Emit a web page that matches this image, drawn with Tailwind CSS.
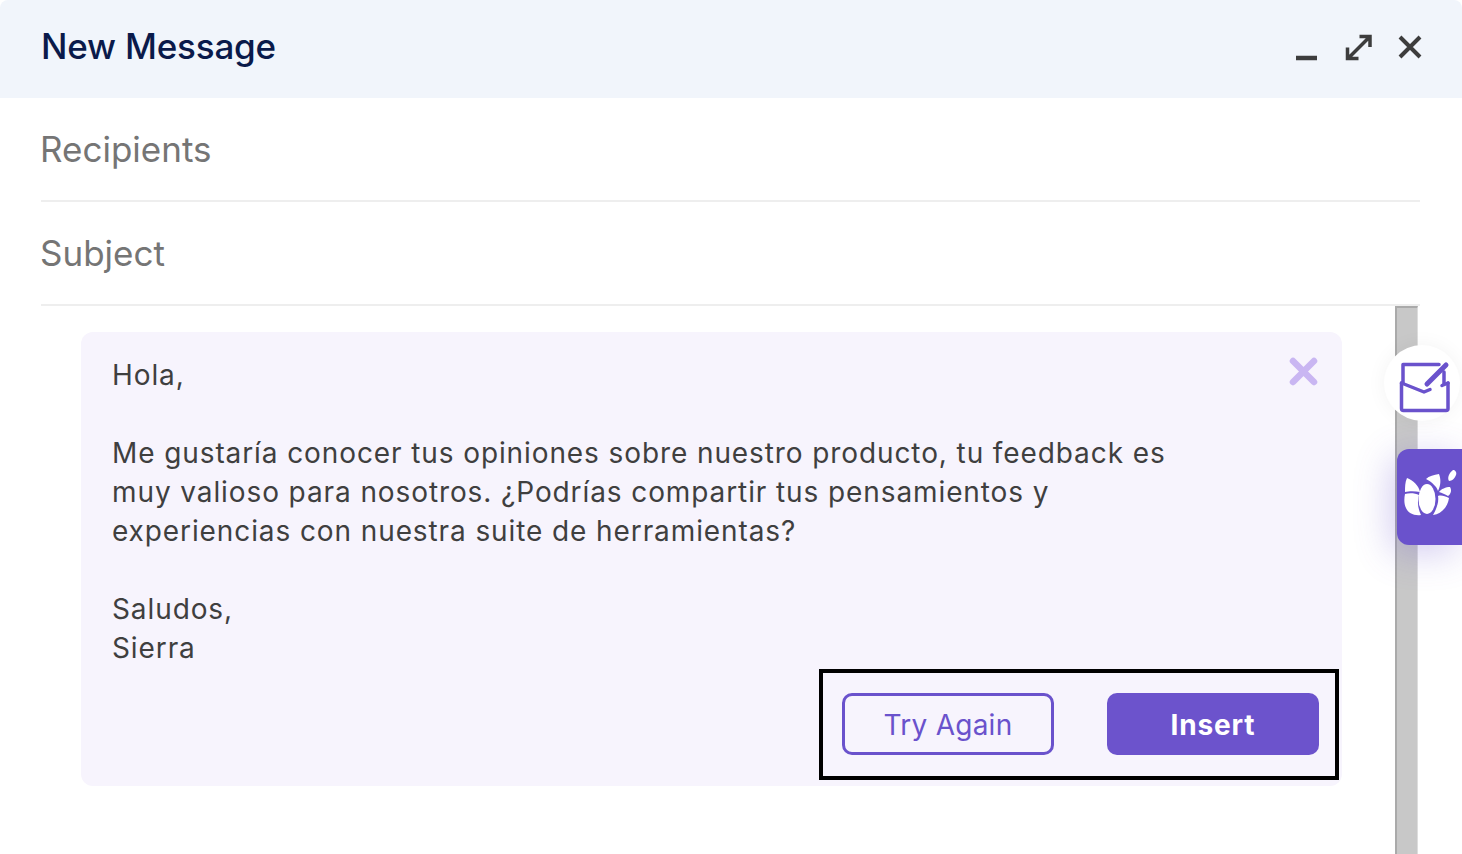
<!DOCTYPE html>
<html>
    <head>
        <meta charset="UTF-8">
        <meta name="viewport" content="width=device-width, initial-scale=1.0">
        <script src="https://cdn.jsdelivr.net/npm/@tailwindcss/browser@4"></script>
        <title>New Message</title>
    </head>
    <body class="bg-white font-['Inter',sans-serif] overflow-hidden">
        <div class="relative w-[1462px] h-[854px] overflow-hidden">
            <!-- Header -->
            <header class="flex justify-between items-center h-[98px] pl-[41px] pr-[39px] pb-1 bg-[#f1f5fb] rounded-t-lg">
                <h1 class="-mt-[2px] text-[35px] font-medium tracking-[-0.2px] text-[#0a1a4a]">New Message</h1>
                <div class="flex items-center gap-[25px] text-[#3d3d3d]">
                    <svg class="w-[27px] h-[27px]" viewBox="0 0 27 27" fill="none" stroke="currentColor" stroke-width="4.500"><path d="M3 24H24"/></svg>
                    <svg class="w-[27px] h-[27px]" viewBox="0 0 27 27" fill="none" stroke="currentColor" stroke-width="3.500"><path d="M14.500 2.500H25V13M25 2.500L3 24.500M2.500 13.500V24.500H13.500"/></svg>
                    <svg class="w-[26px] h-[26px]" viewBox="0 0 26 26" fill="none" stroke="currentColor" stroke-width="4"><path d="M3 3L23 23M23 3L3 23"/></svg>
                </div>
            </header>

            <!-- Fields -->
            <div class="ml-[41px] w-[1379px]">
                <div class="h-[104px] flex items-center border-b-2 border-[#eeeeee] text-[35px] text-[#757575]"><span class="-ml-px">Recipients</span></div>
                <div class="h-[104px] flex items-center border-b-2 border-[#eeeeee] text-[35px] text-[#757575]"><span class="-ml-px">Subject</span></div>
            </div>

            <!-- Body -->
            <div class="flex pl-[81px] h-[549px]">
                <div class="relative w-[1261px] h-[454px] mt-[26px] bg-[#f7f4fd] rounded-xl pl-[31px] pt-[24px]">
                    <p class="text-[28px] leading-[39px] tracking-[0.9px] text-[#3f3f3f] whitespace-pre-line">Hola,

Me gustaría conocer tus opiniones sobre nuestro producto, tu feedback es
muy valioso para nosotros. ¿Podrías compartir tus pensamientos y
experiencias con nuestra suite de herramientas?

Saludos,
Sierra</p>
                    <svg class="absolute top-[25px] right-[24px] w-[29px] h-[29px]" viewBox="0 0 29 29" fill="none" stroke="#c9b6f2" stroke-width="6.500" stroke-linecap="round"><path d="M4 4L25 25M25 4L4 25"/></svg>
                    <!-- Action box -->
                    <div class="absolute left-[738px] top-[337px] w-[520px] h-[111px] border-4 border-black flex items-center justify-between pl-[19px] pr-[16px] pb-[2px]">
                        <button class="w-[212px] h-[62px] pt-[2px] border-[3px] border-[#6a52cc] rounded-[10px] text-[28px] tracking-[0.25px] text-[#6a52cc]">Try Again</button>
                        <button class="w-[212px] h-[62px] pt-[3px] bg-[#6c53cc] rounded-[10px] text-[28px] font-bold tracking-[0.85px] text-white">Insert</button>
                    </div>
                </div>
                <!-- Scrollbar -->
                <div class="ml-[53px] w-[23px] h-full bg-[#c8c8c8] border-l-2 border-t-2 border-r border-[#aaaaaa] border-r-[#dddddd]"></div>
            </div>

            <!-- Floating widgets -->
            <div class="absolute left-[1384px] top-[345px] w-[76px] h-[76px] rounded-full bg-white shadow-[0_0_20px_rgba(0,0,0,0.05)] flex items-center justify-center">
                <svg class="w-[52px] h-[52px] ml-[6px] mt-[8px]" viewBox="0 0 52 52" fill="none" stroke="#6a52cc" stroke-width="3.500" stroke-linejoin="round" stroke-linecap="round">
                    <path d="M4 22V3.500H40"/>
                    <path d="M45 11V23"/>
                    <path d="M2.500 22V47.500Q2.500 49.500 4.500 49.500H47Q49 49.500 49 47.500V22"/>
                    <path d="M2.500 22L25 31L31 28.500M49 22L43 24.500"/>
                    <path d="M28 23L47 4" stroke-width="5"/>
                </svg>
            </div>
            <div class="absolute left-[1397px] top-[449px] w-[65px] h-[96px] rounded-l-xl bg-[#6a52cc] shadow-[-6px_8px_36px_rgba(106,82,204,0.3)] flex items-center justify-center">
                <svg class="w-[56px] h-[48px] ml-[3px] -mt-[6px]" viewBox="0 0 56 48" fill="#ffffff">
                    <path d="M4 8C10 10 16 16 17 22C12 21 6 21 2 22C2 17 2 12 4 8Z"/>
                    <path d="M2 24C6 23 12 23 16 25C14 32 15 39 18 45C11 46 5 43 3 38C1 34 1 29 2 24Z"/>
                    <ellipse cx="24" cy="29" rx="8.500" ry="15"/>
                    <path d="M23 9C26 6 31 5 36 4C38 9 38 15 35 21C34 17 29 12 23 9Z"/>
                    <path d="M36 22C38 19 43 17 47 17C49 20 48 24 45 26C42 24 39 23 36 22Z"/>
                    <path d="M35 26C38 25 42 26 46 28C45 36 39 44 30 45C34 38 36 32 35 26Z"/>
                    <path d="M50 0C52 0 54 2 53 5C52 8 49 11 46 11C44 8 46 3 50 0Z"/>
                </svg>
            </div>
        </div>
    </body>
</html>
